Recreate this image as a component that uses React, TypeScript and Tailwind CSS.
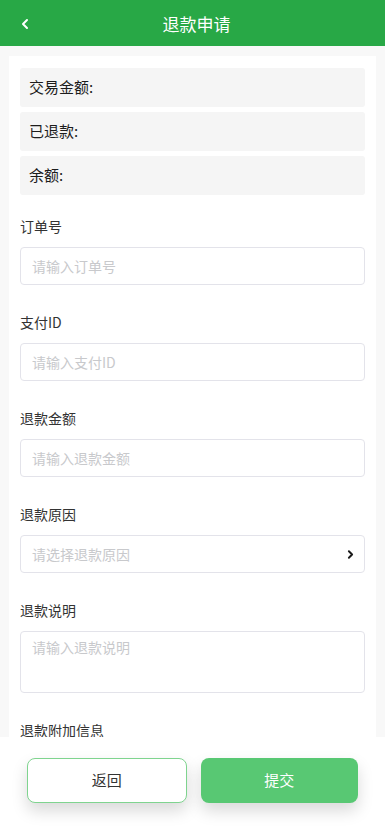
import { ChevronLeft, ChevronRight } from "lucide-react";

const infoRows = ["交易金额:", "已退款:", "余额:"];

const fields = [
  { label: "订单号", placeholder: "请输入订单号", type: "input" },
  { label: "支付ID", placeholder: "请输入支付ID", type: "input" },
  { label: "退款金额", placeholder: "请输入退款金额", type: "input" },
  { label: "退款原因", placeholder: "请选择退款原因", type: "select" },
  { label: "退款说明", placeholder: "请输入退款说明", type: "textarea" },
];

export default function App() {
  return (
    <div
      className="h-screen flex flex-col bg-[#f8f8f8] overflow-hidden"
      style={{ fontFamily: '"Noto Sans CJK SC", "Noto Sans", sans-serif' }}
    >
      <header className="relative h-[46px] shrink-0 flex items-center justify-center bg-[#28a846] text-white">
        <button className="absolute left-[17px] top-[16px] p-0">
          <ChevronLeft size={16} strokeWidth={3} />
        </button>
        <h1 className="text-[17px] leading-none pl-[8px] pt-[1px]">退款申请</h1>
      </header>

      <main className="flex-1 overflow-hidden pt-[10px] px-[9px]">
        <section className="bg-white px-[11px] pt-[12px] pb-[40px]">
          <div className="flex flex-col gap-[5px]">
            {infoRows.map((row, index) => (
              <div
                key={index}
                className="h-[39px] flex items-center px-[9px] rounded-[3px] bg-[#f5f5f5] text-[15px] text-[#1c1c1c]"
              >
                {row}
              </div>
            ))}
          </div>

          <div className="pt-[21px]">
            {fields.map((item, index) => (
              <div key={index} className="mb-[27px]">
                <label className="block h-[20px] leading-[20px] text-[14px] text-[#333] mb-[11px]">
                  {item.label}
                </label>
                {item.type === "textarea" ? (
                  <textarea
                    placeholder={item.placeholder}
                    className="block w-full h-[62px] resize-none rounded-[4px] border border-[#e3e3ea] px-[11px] py-[5px] text-[14px] leading-[20px] outline-none placeholder:text-[#c8c9cc]"
                  />
                ) : item.type === "select" ? (
                  <div className="h-[38px] flex items-center justify-between rounded-[4px] border border-[#e3e3ea] pl-[11px] pr-[7px] text-[14px] text-[#c8c9cc]">
                    <span>{item.placeholder}</span>
                    <ChevronRight size={13} strokeWidth={3.5} className="text-[#1a1a1a]" />
                  </div>
                ) : (
                  <input
                    placeholder={item.placeholder}
                    className="block w-full h-[38px] rounded-[4px] border border-[#e3e3ea] px-[11px] text-[14px] outline-none placeholder:text-[#c8c9cc]"
                  />
                )}
              </div>
            ))}
            <label className="block h-[20px] leading-[20px] text-[14px] text-[#333]">
              退款附加信息
            </label>
          </div>
        </section>
      </main>

      <footer className="h-[100px] shrink-0 bg-white flex gap-[14px] px-[27px] pt-[21px]">
        <button className="flex-1 h-[45px] rounded-[8px] border border-[#7fd48f] bg-white text-[15px] text-[#333] shadow-[0_8px_16px_rgba(0,0,0,0.15)]">
          返回
        </button>
        <button className="flex-1 h-[45px] rounded-[8px] bg-[#58c873] text-[15px] text-white shadow-[0_8px_16px_rgba(0,0,0,0.15)]">
          提交
        </button>
      </footer>
    </div>
  );
}
